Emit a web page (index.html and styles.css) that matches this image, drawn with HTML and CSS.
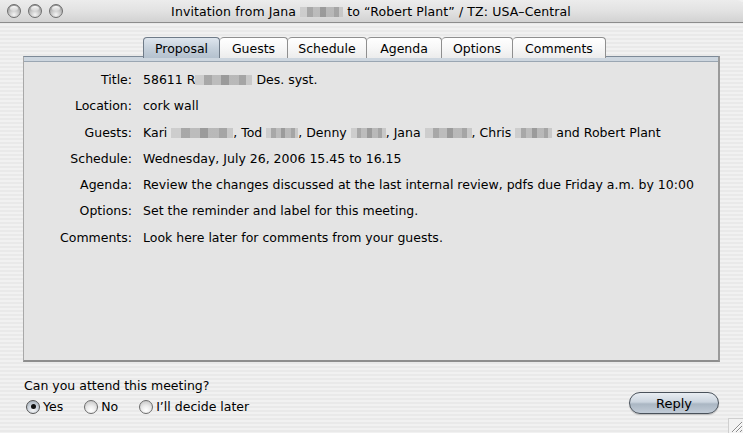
FILE: index.html
```html
<!DOCTYPE html>
<html>
<head>
<meta charset="utf-8">
<link rel="stylesheet" href="styles.css">
</head>
<body>
<div class="window">
  <div class="titlebar">
    <div class="lights">
      <span class="light"></span><span class="light"></span><span class="light"></span>
    </div>
    <div class="title">Invitation from Jana <span class="blur blur-t"></span> to “Robert Plant” / TZ: USA–Central</div>
  </div>
  <div class="content">
    <div class="tabs">
      <div class="tab tab-proposal active">Proposal</div>
      <div class="tab tab-guests">Guests</div>
      <div class="tab tab-schedule">Schedule</div>
      <div class="tab tab-agenda">Agenda</div>
      <div class="tab tab-options">Options</div>
      <div class="tab tab-comments">Comments</div>
    </div>
    <div class="panel">
      <div class="rows">
        <div class="label">Title:</div>
        <div class="value">58611 R<span class="blur blur-1"></span> Des. syst.</div>
        <div class="label">Location:</div>
        <div class="value">cork wall</div>
        <div class="label">Guests:</div>
        <div class="value">Kari <span class="blur blur-2"></span>, Tod <span class="blur blur-3"></span>, Denny <span class="blur blur-4"></span>, Jana <span class="blur blur-5"></span>, Chris <span class="blur blur-6"></span> and Robert Plant</div>
        <div class="label">Schedule:</div>
        <div class="value">Wednesday, July 26, 2006 15.45 to 16.15</div>
        <div class="label">Agenda:</div>
        <div class="value">Review the changes discussed at the last internal review, pdfs due Friday a.m. by 10:00</div>
        <div class="label">Options:</div>
        <div class="value">Set the reminder and label for this meeting.</div>
        <div class="label">Comments:</div>
        <div class="value">Look here later for comments from your guests.</div>
      </div>
    </div>
    <div class="bottom">
      <div class="question">
        <div class="q-text">Can you attend this meeting?</div>
        <div class="radios">
          <label class="radio"><span class="dot checked"></span>Yes</label>
          <label class="radio"><span class="dot"></span>No</label>
          <label class="radio"><span class="dot"></span>I’ll decide later</label>
        </div>
      </div>
      <div class="reply">Reply</div>
    </div>
  </div>
  <svg class="grip" width="15" height="15" viewBox="0 0 15 15">
    <rect x="0.5" y="0.5" width="15" height="15" fill="#f2f2f2" stroke="#cfcfcf"/>
    <path d="M4 14 L14 4 M8 14 L14 8 M12 14 L14 12" stroke="#8a8a8a" stroke-width="1"/>
    <path d="M5 14 L14 5 M9 14 L14 9" stroke="#ffffff" stroke-width="1"/>
  </svg>
</div>
</body>
</html>
```

FILE: styles.css
```css
* { box-sizing: border-box; }
html, body {
  margin: 0;
  padding: 0;
  width: 743px;
  height: 433px;
  overflow: hidden;
}
body {
  font-family: "DejaVu Sans", "Liberation Sans", sans-serif;
  font-size: 12.5px;
  color: #000;
}
.window {
  position: relative;
  width: 743px;
  height: 433px;
  display: flex;
  flex-direction: column;
  background: repeating-linear-gradient(to bottom, #f1f1f1 0 2px, #e9e9e9 2px 4px);
}
.titlebar {
  height: 23px;
  flex: none;
  display: flex;
  align-items: center;
  position: relative;
  background: linear-gradient(to bottom, #ececec 0%, #e2e2e2 50%, #d2d2d2 100%);
  border-bottom: 1px solid #8c8c8c;
  border-top-right-radius: 6px;
}
.lights {
  display: flex;
  gap: 7px;
  padding-left: 7px;
}
.light {
  width: 14px;
  height: 14px;
  border-radius: 50%;
  border: 1px solid #6e6e6e;
  background: radial-gradient(circle at 50% 80%, #f4f4f4 0%, #c4c4c4 45%, #8a8a8a 100%);
  position: relative;
}
.light::after {
  content: "";
  position: absolute;
  left: 2px;
  top: 1px;
  width: 8px;
  height: 5px;
  border-radius: 50%;
  background: linear-gradient(#ffffff, rgba(255,255,255,0.2));
}
.title {
  flex: 1;
  text-align: center;
  font-size: 12.5px;
  padding-right: 64px;
  letter-spacing: 0.1px;
}
.blur {
  display: inline-block;
  height: 10px;
  vertical-align: -1px;
  background:
    linear-gradient(to right, #c9c9c9 0 16%, #9d9d9d 16% 30%, #b5b5b5 30% 46%, #8e8e8e 46% 60%, #b1b1b1 60% 78%, #9a9a9a 78% 90%, #c3c3c3 90% 100%);
  opacity: 0.85;
}
.blur-t { width: 43px; }
.blur-1 { width: 57px; }
.blur-2 { width: 62px; }
.blur-3 { width: 32px; }
.blur-4 { width: 35px; }
.blur-5 { width: 47px; }
.blur-6 { width: 37px; }

.content {
  flex: 1;
  display: flex;
  flex-direction: column;
  padding: 14px 23px 0 23px;
}
.tabs {
  display: flex;
  justify-content: center;
  height: 21px;
  position: relative;
  z-index: 2;
  padding-left: 6px;
}
.tab {
  height: 21px;
  display: flex;
  align-items: center;
  justify-content: center;
  border: 1px solid #8f8f8f;
  border-bottom: none;
  border-left: none;
  border-radius: 4px 4px 0 0;
  background: linear-gradient(to bottom, #ffffff 0%, #f7f7f7 50%, #ececec 100%);
  padding-top: 1px;
}
.tab.active {
  border-left: 1px solid #6f7b88;
  border-color: #6f7b88;
  background: linear-gradient(to bottom, #dfe6ee 0%, #c6d1dc 50%, #b4c1ce 100%);
}
.tab-proposal { width: 77px; }
.tab-guests { width: 68px; }
.tab-schedule { width: 79px; }
.tab-agenda { width: 75px; }
.tab-options { width: 71px; }
.tab-comments { width: 93px; }

.panel {
  height: 306px;
  flex: none;
  background: #e4e4e4;
  border-left: 1px solid #a8a8a8;
  border-right: 2px solid #9a9a9a;
  border-bottom: 2px solid #8e8e8e;
  border-top: 1px solid #7d8a98;
  box-shadow: inset 0 4px 0 #cdd6df, inset 0 5px 0 #9aa6b2;
  margin-top: -2px;
  padding-top: 10px;
}
.rows {
  display: grid;
  grid-template-columns: 108px auto;
  column-gap: 11px;
  line-height: 26.3px;
}
.label { text-align: right; }
.value { white-space: nowrap; }

.bottom {
  display: flex;
  justify-content: space-between;
  align-items: flex-end;
  padding-top: 16px;
}
.question { padding-left: 1px; }
.q-text { line-height: 16px; }
.radios {
  display: flex;
  gap: 21px;
  margin-top: 4px;
  padding-left: 2px;
}
.radio {
  display: flex;
  align-items: center;
  gap: 3px;
  line-height: 17px;
}
.dot {
  width: 14px;
  height: 14px;
  border-radius: 50%;
  border: 1px solid #6c6c6c;
  background: radial-gradient(circle at 50% 75%, #ffffff 0%, #ececec 40%, #bdbdbd 100%);
  display: inline-flex;
  align-items: center;
  justify-content: center;
}
.dot.checked {
  background: radial-gradient(circle at 50% 75%, #f6f6f6 0%, #cfd6de 45%, #9aa4ae 100%);
  border-color: #555;
}
.dot.checked::after {
  content: "";
  width: 5px;
  height: 5px;
  border-radius: 50%;
  background: #111;
}
.reply {
  width: 90px;
  height: 22px;
  margin-right: 1px;
  margin-bottom: 1px;
  border-radius: 11px;
  border: 1px solid #4a525b;
  background: linear-gradient(to bottom, #e8edf2 0%, #ccd5df 45%, #aab6c3 55%, #c2ccd7 100%);
  display: flex;
  align-items: center;
  justify-content: center;
  font-size: 13px;
  box-shadow: 0 1px 1px rgba(0,0,0,0.2);
}
.grip {
  position: absolute;
  right: 0;
  bottom: 0;
}
```
